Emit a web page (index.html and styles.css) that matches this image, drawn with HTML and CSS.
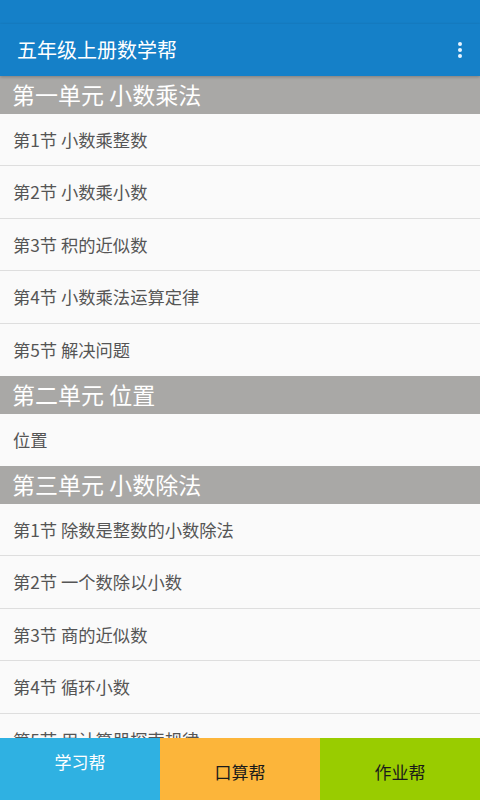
FILE: index.html
```html
<!DOCTYPE html>
<html lang="zh">
<head>
<meta charset="utf-8">
<link rel="stylesheet" href="styles.css">
</head>
<body>
<div class="app">
  <div class="status"></div>
  <div class="appbar">
    <span class="title">五年级上册数学帮</span>
    <span class="menu"><i></i><i></i><i></i></span>
  </div>
  <div class="list">
    <div class="unit">第一单元 小数乘法</div>
    <div class="item">第1节 小数乘整数</div>
    <div class="item">第2节 小数乘小数</div>
    <div class="item">第3节 积的近似数</div>
    <div class="item">第4节 小数乘法运算定律</div>
    <div class="item last">第5节 解决问题</div>
    <div class="unit">第二单元 位置</div>
    <div class="item last">位置</div>
    <div class="unit">第三单元 小数除法</div>
    <div class="item">第1节 除数是整数的小数除法</div>
    <div class="item">第2节 一个数除以小数</div>
    <div class="item">第3节 商的近似数</div>
    <div class="item">第4节 循环小数</div>
    <div class="item">第5节 用计算器探索规律</div>
  </div>
  <div class="tabs">
    <div class="tab t1">学习帮</div>
    <div class="tab t2">口算帮</div>
    <div class="tab t3">作业帮</div>
  </div>
</div>
</body>
</html>
```
FILE: styles.css
```css
* { box-sizing: border-box; }
html, body { margin: 0; padding: 0; }
body {
  width: 480px;
  height: 800px;
  overflow: hidden;
  background: #fafafa;
  font-family: "Noto Sans CJK SC", "Noto Sans", sans-serif;
}
.app {
  position: relative;
  width: 480px;
  height: 800px;
  display: flex;
  flex-direction: column;
  overflow: hidden;
}
.status { height: 24px; background: #1580c8; flex: none; }
.appbar {
  height: 52px;
  flex: none;
  background: #1580c8;
  display: flex;
  align-items: center;
  justify-content: space-between;
  padding: 0 18px 0 17px;
  box-shadow: 0 1px 3px rgba(0,0,0,0.25);
  position: relative;
  z-index: 1;
}
.title { color: #fff; font-size: 20px; line-height: 1; }
.menu { display: flex; flex-direction: column; gap: 2px; }
.menu i { display: block; width: 4px; height: 4px; border-radius: 50%; background: #e8f4ff; }
.list { flex: 1; overflow: hidden; }
.unit {
  height: 37.5px;
  background: #a9a8a6;
  color: #fff;
  font-size: 23px;
  line-height: 37px;
  padding-left: 12px;
  white-space: nowrap;
}
.item {
  height: 52.5px;
  line-height: 52px;
  font-size: 17.3px;
  color: #555;
  padding-left: 13px;
  border-bottom: 1px solid #dedede;
  white-space: nowrap;
}
.item.last { border-bottom: none; }
.tabs {
  position: absolute;
  left: 0; right: 0; bottom: 0;
  height: 62px;
  display: flex;
}
.tab {
  flex: 1;
  display: flex;
  justify-content: center;
  font-size: 17px;
}
.t1 { background: #2fb1e2; color: #fff; align-items: flex-start; padding-top: 11px; }
.t2 { background: #fcb53a; color: #1a1a1a; align-items: center; padding-top: 4px; }
.t3 { background: #99cc00; color: #1a1a1a; align-items: center; padding-top: 4px; }
```
